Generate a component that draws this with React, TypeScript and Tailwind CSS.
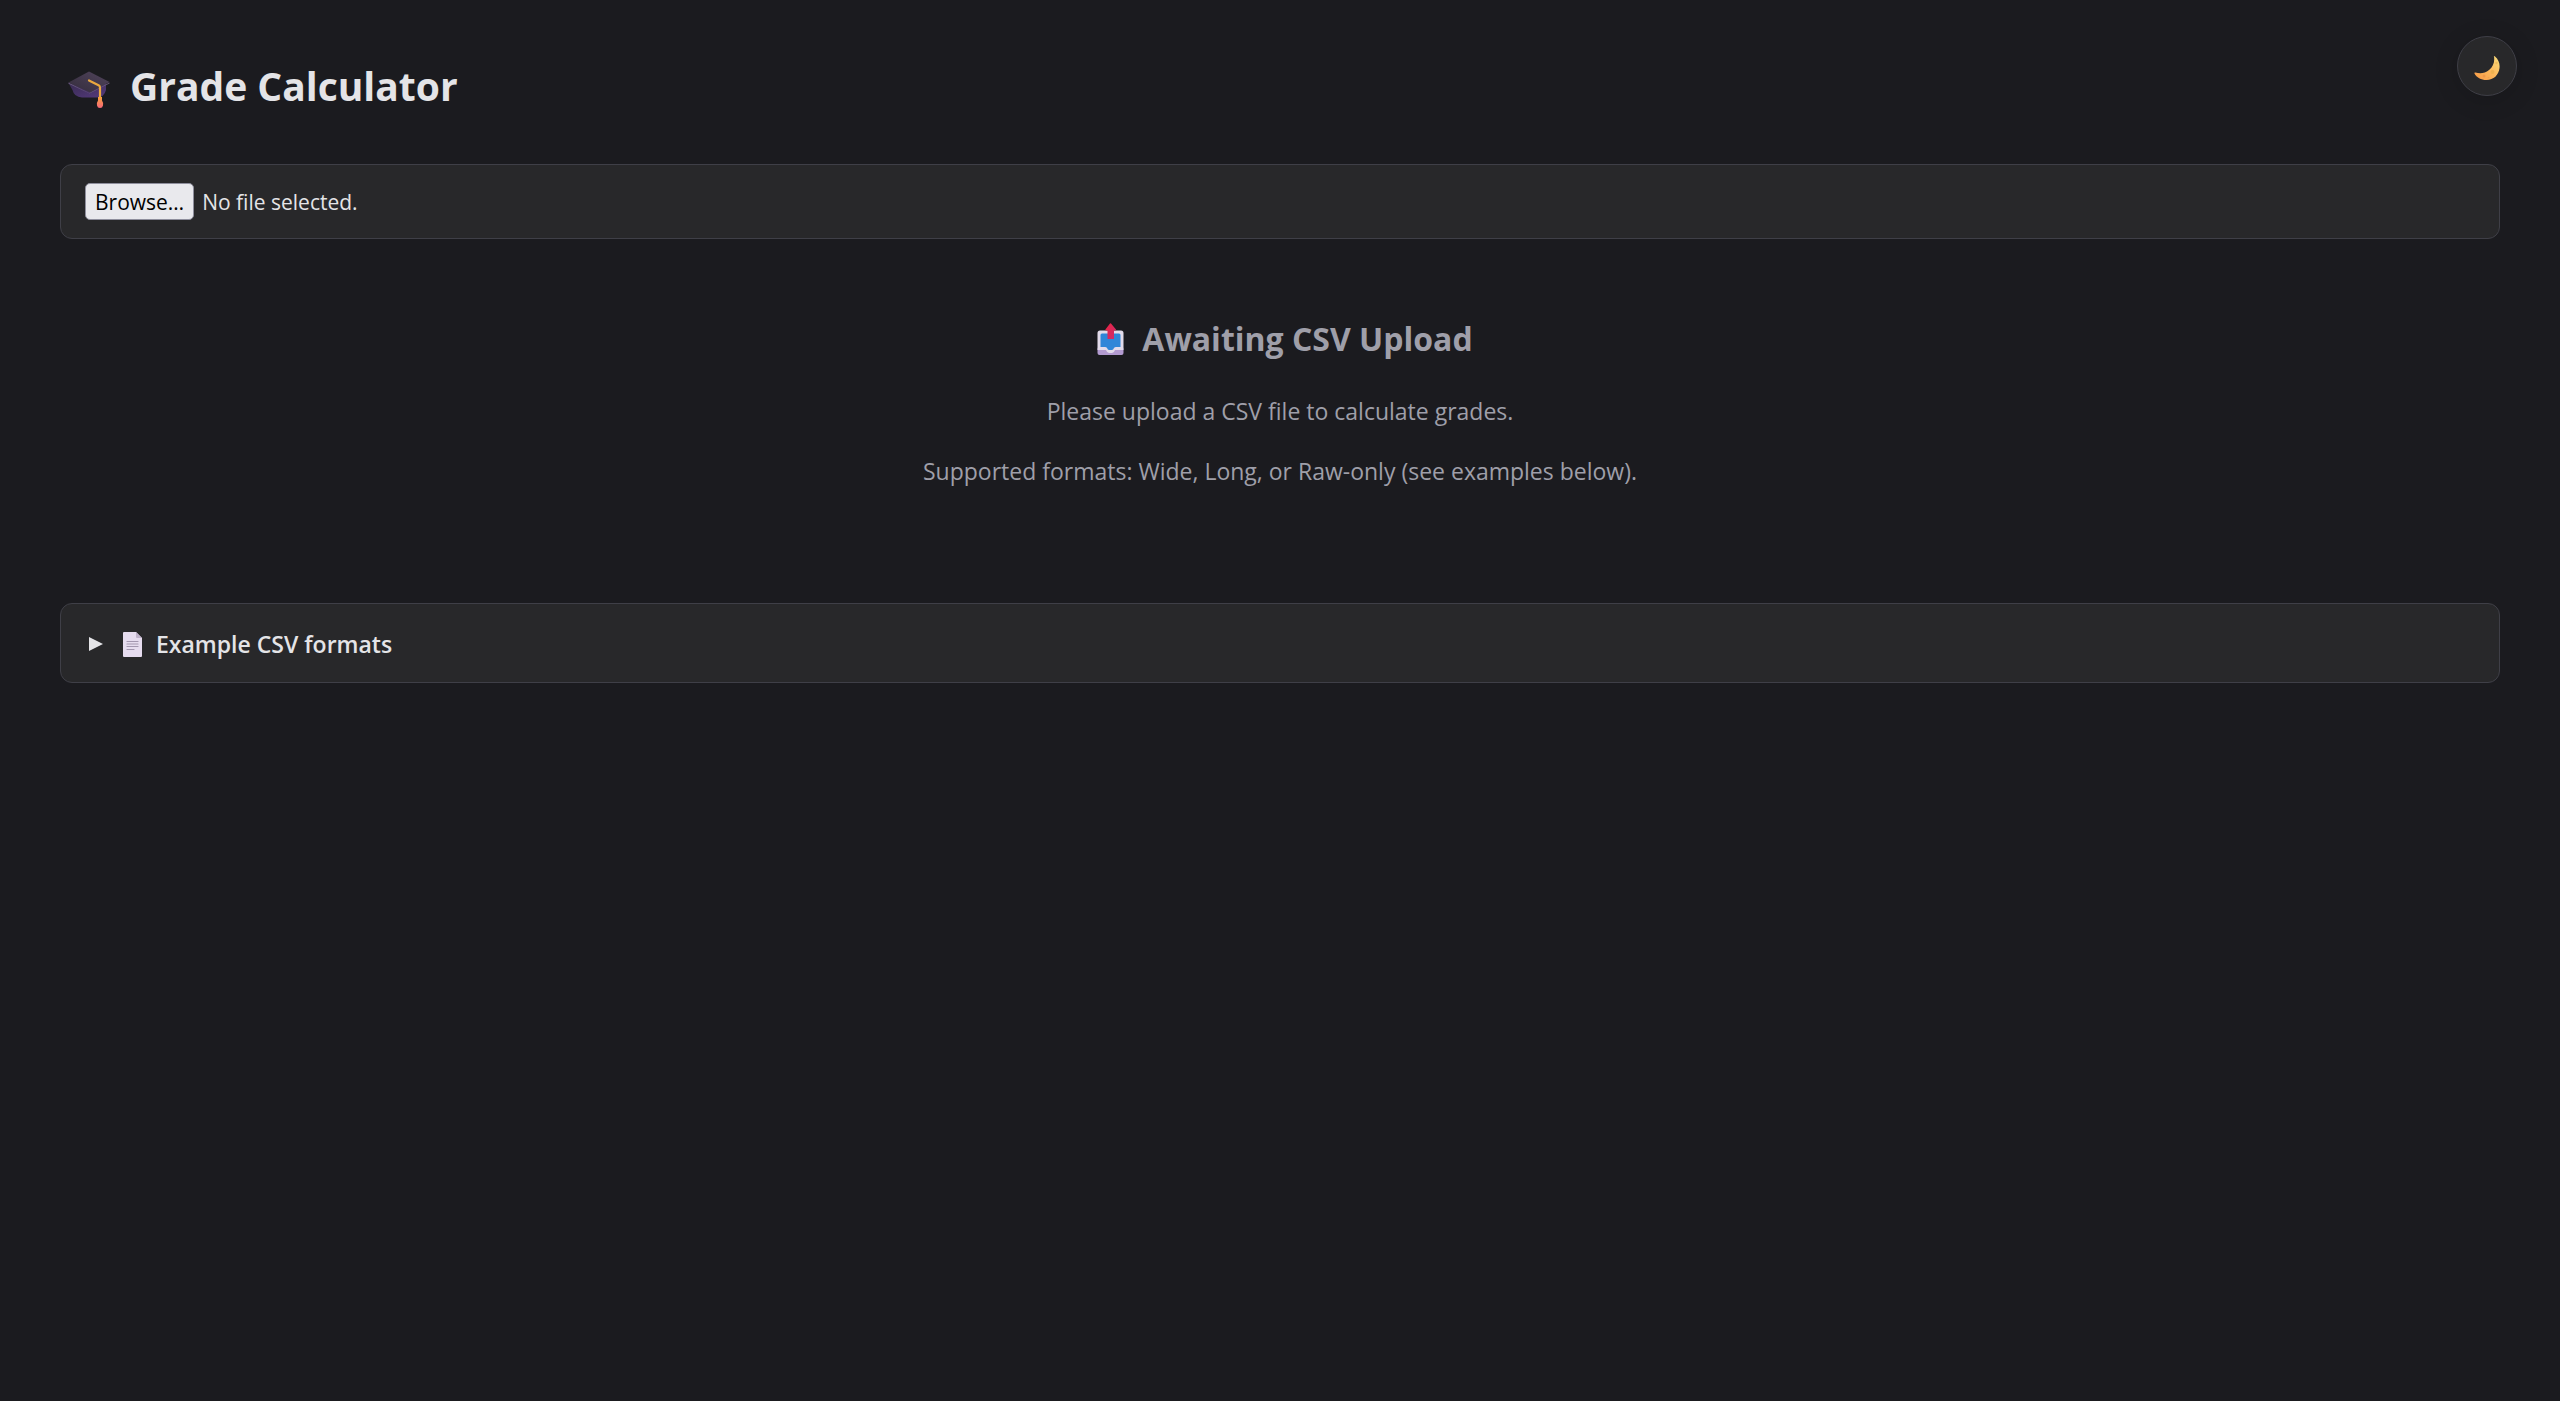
import { useRef, useState } from "react";

function CapIcon() {
  return (
    <svg viewBox="0 0 42 38" className="mt-2 h-[38px] w-[42px]" aria-hidden="true">
      <defs>
        <linearGradient id="capBase" x1="0" y1="0" x2="1" y2="1">
          <stop offset="0" stopColor="#392b52" />
          <stop offset="1" stopColor="#543a7c" />
        </linearGradient>
        <linearGradient id="capTop" x1="0" y1="1" x2="1" y2="0">
          <stop offset="0" stopColor="#332c3b" />
          <stop offset="1" stopColor="#51445c" />
        </linearGradient>
        <linearGradient id="tassel" x1="0" y1="0" x2="0" y2="1">
          <stop offset="0" stopColor="#f7a13c" />
          <stop offset="1" stopColor="#f8677a" />
        </linearGradient>
      </defs>
      <path d="M4 13 L38 13 L38 19 Q36 26.5 29 26.5 L14 26.5 Q6 26 4.500 19 L0.500 12 Z" fill="url(#capBase)" />
      <path d="M0.500 11.500 L21 22 L41.500 11.500 L41.500 12.500 L21.500 22.500 L0.500 12.700 Z" fill="#66577a" />
      <path d="M21 0.500 L41.500 11 L22 21.500 L0.500 11.500 Z" fill="url(#capTop)" />
      <path d="M21 9.500 L31 14.500 Q32 15 32 17 L32 27" fill="none" stroke="#eba83e" strokeWidth="2.200" strokeLinecap="round" />
      <path d="M30 26 h4 v3.500 q1.500 2 1 5 q-.5 2.500 -3 2.500 t-3 -2.500 q-.5 -3 1 -5 Z" fill="url(#tassel)" />
    </svg>
  );
}

function MoonIcon() {
  return (
    <svg viewBox="0 0 26 24" className="mt-1 h-6 w-[26px]" aria-hidden="true">
      <defs>
        <linearGradient id="moonFill" x1="0" y1="1" x2="1" y2="0">
          <stop offset="0" stopColor="#f69744" />
          <stop offset="0.5" stopColor="#fdb85b" />
          <stop offset="1" stopColor="#f8dd7c" />
        </linearGradient>
      </defs>
      <path d="M20 0.600 C19.500 -.2 20.500 0 21 .6 C24.500 3.500 26 7.500 25.500 12 C24.800 19 19.500 24 12.500 24 C7 24 2.500 21.500 .5 17.500 C0 16.500 .8 16.200 1.500 16.500 C6 17.800 11 17.500 15 14 C19.500 10.500 20.800 5.500 20 .6 Z" fill="url(#moonFill)" />
      <circle cx="18.500" cy="16" r="2" fill="#efb14f" />
      <circle cx="22.500" cy="7" r="1.200" fill="#eeb95b" />
      <circle cx="10" cy="20" r="1.500" fill="#ef994a" />
      <circle cx="14.500" cy="21.500" r=".8" fill="#eea24d" />
    </svg>
  );
}

function UploadIcon() {
  return (
    <svg viewBox="0 0 27 32" className="h-8 w-[27px]" aria-hidden="true">
      <defs>
        <linearGradient id="arrowFill" x1="0" y1="0" x2="1" y2="1">
          <stop offset="0" stopColor="#ed233f" />
          <stop offset="1" stopColor="#c92b70" />
        </linearGradient>
      </defs>
      <rect x="0.500" y="24" width="26" height="8" rx="2" fill="#b39bd0" />
      <path d="M3 7.500 h21 q2.500 0 2.500 2.500 v16.500 q0 .5 -.5 .5 h-8 q-1 3 -3 3 h-3 q-2 0 -3 -3 H1 q-.5 0 -.5 -.5 V10 q0 -2.500 2.500 -2.500 Z" fill="#e2dbea" />
      <path d="M5 10.500 h17 q1.500 0 1.500 1.500 v12 h-4.500 q-1.500 0 -2 1 q-.8 2 -2 2 h-3 q-1.200 0 -2 -2 q-.5 -1 -2 -1 H3.500 V12 q0 -1.500 1.500 -1.500 Z" fill="#2f86d8" />
      <path d="M13 .6 q.5 -.6 1 0 L19 6.500 q.4 1 -.6 1 H17 V16 H10.500 V7.500 H9 q-1 0 -.6 -1 Z" fill="url(#arrowFill)" />
    </svg>
  );
}

function PageIcon() {
  return (
    <svg viewBox="0 0 19 25" className="h-[25px] w-[19px]" aria-hidden="true">
      <path d="M1 0 H13 L19 6 V24 q0 1 -1 1 H1 q-1 0 -1 -1 V1 q0 -1 1 -1 Z" fill="#e6dcef" />
      <path d="M13 0 L19 6 H14 q-1 0 -1 -1 Z" fill="#bfb2ca" />
      <path d="M4 9.500 H15 M4 12 H15 M4 14.500 H15 M4 17.500 H11" stroke="#a397b0" strokeWidth="1.200" strokeLinecap="round" />
    </svg>
  );
}

export default function App() {
  const fileRef = useRef<HTMLInputElement>(null);
  const [fileName, setFileName] = useState("");

  return (
    <div className="min-h-screen bg-[#1b1b1f] px-[60px] pt-[58px] font-['Open_Sans','Noto_Sans',sans-serif] text-[23px] leading-9 text-zinc-200">
      <button
        type="button"
        aria-label="Toggle theme"
        className="fixed top-9 right-[43px] flex size-[60px] items-center justify-center rounded-full border border-zinc-700 bg-[#28282a] shadow-[0_4px_24px_rgba(0,0,0,0.15)]"
      >
        <MoonIcon />
      </button>

      <header className="flex h-[56px] items-center gap-5 pl-2">
        <CapIcon />
        <h1 className="text-[39px] leading-[56px] font-bold">Grade Calculator</h1>
      </header>

      <main>
        <div className="mt-[50px] flex items-center gap-2 rounded-xl border border-zinc-700 bg-[#28282a] px-6 py-[18px] text-[21px]">
          <button
            type="button"
            onClick={() => fileRef.current?.click()}
            className="h-[37px] rounded-[5px] border border-[#8f8f9d] bg-[#e9e9ed] px-[9px] leading-9 text-black"
          >
            Browse…
          </button>
          <span>{fileName || "No file selected."}</span>
          <input
            ref={fileRef}
            type="file"
            accept=".csv"
            aria-label="CSV file"
            className="sr-only"
            onChange={(e) => setFileName(e.target.files?.[0]?.name ?? "")}
          />
        </div>

        <section className="flex flex-col items-center pt-[76px] pb-[114px] text-center text-zinc-400">
          <div className="flex h-12 items-center gap-[18px] pl-2.5">
            <UploadIcon />
            <h2 className="text-[32px] leading-[48px] font-bold">Awaiting CSV Upload</h2>
          </div>
          <p className="mt-[30px]">Please upload a CSV file to calculate grades.</p>
          <p className="mt-6">Supported formats: Wide, Long, or Raw-only (see examples below).</p>
        </section>

        <details className="rounded-xl border border-zinc-700 bg-[#28282a] px-7 pt-[22px] pb-5">
          <summary className="flex cursor-pointer list-none items-center font-semibold">
            <svg viewBox="0 0 14 14" className="mr-5 size-3.5" aria-hidden="true">
              <path d="M0 0 L14 7 L0 14 Z" fill="#e4e4e7" />
            </svg>
            <PageIcon />
            <span className="ml-3.5">Example CSV formats</span>
          </summary>
        </details>
      </main>
    </div>
  );
}
